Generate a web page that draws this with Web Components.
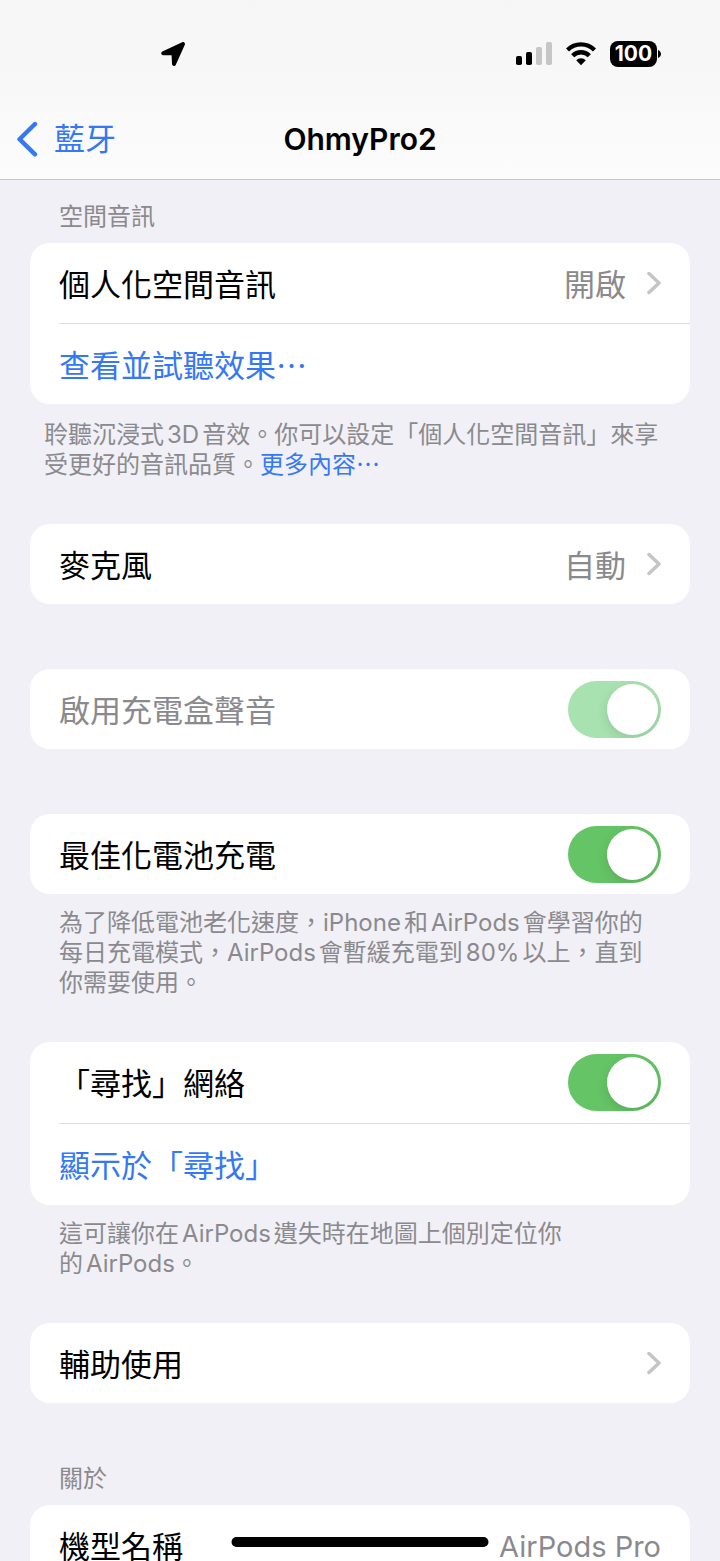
<!DOCTYPE html>
<html lang="zh-Hant">
<head>
<meta charset="utf-8">
<meta name="viewport" content="width=device-width, initial-scale=1">
<title>OhmyPro2</title>
<style>
  :root {
    --page: #f1f0f6;
    --blue: #3478f6;
    --green: #65c466;
    --green-off: #a8e2b0;
    --grey: #8a8a8e;
    --line: #dcdcde;
    --text: 31px;
    --small: 24px;
  }
  body {
    margin: 0;
    background: var(--page);
    color: #000;
    font-family: Inter, "Noto Sans CJK TC", sans-serif;
    font-size: var(--text);
    text-autospace: normal;
  }
</style>
</head>
<body>
<settings-page></settings-page>

<script>
class StatusBar extends HTMLElement {
  constructor() {
    super();
    this.attachShadow({ mode: 'open' }).innerHTML = `
      <style>
        :host {
          display: flex;
          justify-content: space-between;
          align-items: center;
          box-sizing: border-box;
          height: 98px;
          padding: 10px 59px 0 160px;
        }
        svg { display: block; }
        .right { display: flex; align-items: center; gap: 14px; }
        .battery { display: flex; align-items: center; gap: 1px; }
        .level {
          width: 47px;
          height: 26px;
          border-radius: 8px;
          background: #000;
          color: #fff;
          font-size: 21px;
          font-weight: 700;
          line-height: 26px;
          text-align: center;
        }
      </style>
      <svg width="26" height="26" viewBox="0 0 26 26" stroke="#000" stroke-width="4" stroke-linejoin="round" aria-hidden="true">
        <path d="M3.200 12.200 23 3 14 23 13.500 12.200Z"/>
      </svg>
      <div class="right">
        <svg width="36" height="24" viewBox="0 0 36 24" aria-hidden="true">
          <rect x="0" y="14" width="6" height="9" rx="1.800"/>
          <rect x="10" y="10" width="6" height="13" rx="1.800"/>
          <rect x="20" y="5" width="6" height="18" rx="1.800" fill="#c6c6c6"/>
          <rect x="30" y="0" width="6" height="23" rx="1.800" fill="#c6c6c6"/>
        </svg>
        <svg width="30" height="24" viewBox="0 0 30 24" aria-hidden="true">
          <g fill="none" stroke="#000" stroke-width="4.400">
            <path d="M1.500 8a19 19 0 0 1 27 0"/>
            <path d="M6.700 13.700a11.700 11.700 0 0 1 16.600 0"/>
          </g>
          <path d="M15 23.300 10.200 18.300a6.800 6.800 0 0 1 9.600 0Z"/>
        </svg>
        <div class="battery">
          <div class="level">100</div>
          <svg width="3" height="8" viewBox="0 0 3 8" aria-hidden="true">
            <path d="M0 0c4 2 4 6 0 8Z"/>
          </svg>
        </div>
      </div>
    `;
  }
}
customElements.define('status-bar', StatusBar);

class NavBar extends HTMLElement {
  constructor() {
    super();
    this.attachShadow({ mode: 'open' }).innerHTML = `
      <style>
        :host {
          display: grid;
          grid-template-columns: 1fr auto 1fr;
          align-items: center;
          height: 81px;
          padding: 0 16px;
        }
        a {
          display: flex;
          align-items: center;
          gap: 16px;
          color: var(--blue);
          text-decoration: none;
          line-height: 40px;
        }
        h1 {
          margin: 0;
          font-size: 30px;
          font-weight: 600;
          line-height: 40px;
        }
      </style>
      <a href="#back">
        <svg width="22" height="36" viewBox="0 0 22 36" fill="none" stroke="currentColor" stroke-width="4.400" stroke-linecap="round" stroke-linejoin="round" aria-hidden="true">
          <path d="M19 3 3.500 18.200 19 33.300"/>
        </svg>
        <slot name="back"></slot>
      </a>
      <h1><slot></slot></h1>
    `;
  }
}
customElements.define('nav-bar', NavBar);

// white rounded card with an optional heading above and a note below
class SettingsGroup extends HTMLElement {
  constructor() {
    super();
    this.attachShadow({ mode: 'open' }).innerHTML = `
      <style>
        :host { display: block; --row: 80px; }
        :host([tall]) { --row: 81px; }
        h2, .note {
          margin: 0;
          color: var(--grey);
          font-size: var(--small);
          font-weight: 400;
          line-height: 30px;
        }
        h2 { padding: 22px 29px 11px; }
        .card {
          border-radius: 20px;
          background: #fff;
          overflow: hidden;
        }
        .note { padding: 14px 29px 0; }
        :host([wide]) .note { padding: 16px 14px 0; }
        :host(:not([heading])) h2, :host(:not([note])) .note { display: none; }
      </style>
      <h2></h2>
      <div class="card"><slot></slot></div>
      <div class="note"><slot name="note"></slot></div>
    `;
  }

  connectedCallback() {
    this.shadowRoot.querySelector('h2').textContent = this.getAttribute('heading') || '';
  }
}
customElements.define('settings-group', SettingsGroup);

const rowStyle = `
  :host { display: block; padding-left: 29px; }
  :host([divided]) { --divider: 1px; }
  .row {
    display: flex;
    align-items: center;
    justify-content: space-between;
    box-sizing: content-box;
    min-height: var(--row);
    padding: 0 29px 0 0;
    border: 0 solid var(--line);
    border-bottom-width: var(--divider, 0);
    background: none;
    color: inherit;
    font: inherit;
    line-height: 40px;
    text-align: left;
    text-decoration: none;
  }
  .text { padding-top: 3px; }
`;

class LinkRow extends HTMLElement {
  constructor() {
    super();
    this.attachShadow({ mode: 'open' }).innerHTML = `
      <style>
        ${rowStyle}
        .row { box-sizing: border-box; width: 100%; min-height: calc(var(--row) + var(--divider, 0px)); }
        .value { display: flex; align-items: center; gap: 21px; color: var(--grey); }
        :host([plain]) .value { gap: 0; font-size: 29px; }
        :host([plain]) svg { display: none; }
      </style>
      <button class="row" type="button">
        <span class="text"><slot></slot></span>
        <span class="value">
          <span class="text"><slot name="value"></slot></span>
          <svg width="14" height="24" viewBox="0 0 14 24" fill="none" stroke="#c5c5c7" stroke-width="3.500" stroke-linecap="round" stroke-linejoin="round" aria-hidden="true">
            <path d="M2 2.500 12 12 2 21.500"/>
          </svg>
        </span>
      </button>
    `;
  }
}
customElements.define('link-row', LinkRow);

class ActionRow extends HTMLElement {
  constructor() {
    super();
    this.attachShadow({ mode: 'open' }).innerHTML = `
      <style>
        ${rowStyle}
        .row { color: var(--blue); }
      </style>
      <a class="row" href="#"><span class="text"><slot></slot></span></a>
    `;
  }
}
customElements.define('action-row', ActionRow);

class SwitchRow extends HTMLElement {
  constructor() {
    super();
    this.attachShadow({ mode: 'open' }).innerHTML = `
      <style>
        ${rowStyle}
        :host([disabled]) { color: var(--grey); }
        input {
          appearance: none;
          flex: none;
          display: flex;
          box-sizing: border-box;
          width: 93px;
          height: 57px;
          margin: 0;
          padding: 3px;
          border-radius: 29px;
          background: #e9e9ea;
          overflow: hidden;
        }
        input::before {
          content: '';
          width: 51px;
          height: 51px;
          border-radius: 50%;
          background: #fff;
          box-shadow: 0 4px 12px rgba(0, 0, 0, 0.12);
        }
        input:checked { justify-content: flex-end; background: var(--green); }
        input:checked:disabled { background: var(--green-off); }
      </style>
      <label class="row">
        <span class="text"><slot></slot></span>
        <input type="checkbox" role="switch" checked>
      </label>
    `;
  }

  connectedCallback() {
    this.shadowRoot.querySelector('input').disabled = this.hasAttribute('disabled');
  }
}
customElements.define('switch-row', SwitchRow);

class SettingsPage extends HTMLElement {
  constructor() {
    super();
    this.attachShadow({ mode: 'open' }).innerHTML = `
      <style>
        :host {
          display: block;
          height: 100vh;
          overflow: hidden;
        }
        header {
          border-bottom: 1px solid #c5c5c9;
          background: linear-gradient(#f6f6f6, #f8f8f8 50%, #fcfcfd);
        }
        main { padding: 0 30px; }
        settings-group { margin-top: 65px; }
        settings-group[note] + settings-group { margin-top: 44px; }
        settings-group[heading] { margin-top: 39px; }
        settings-group:first-child { margin-top: 0; }
        a { color: var(--blue); text-decoration: none; }
        .keep { white-space: nowrap; }
        .home {
          position: fixed;
          left: 50%;
          bottom: 14px;
          width: 257px;
          height: 10px;
          border-radius: 5px;
          background: #000;
          transform: translateX(-50%);
        }
      </style>
      <header>
        <status-bar></status-bar>
        <nav-bar><span slot="back">藍牙</span>OhmyPro2</nav-bar>
      </header>
      <main>
        <settings-group heading="空間音訊" note wide>
          <link-row divided>個人化空間音訊<span slot="value">開啟</span></link-row>
          <action-row>查看並試聽效果⋯</action-row>
          <span slot="note">聆聽沉浸式3D音效。你可以設定「個人化空間音訊」來享受更好的音訊品質。<a href="#more">更多內容⋯</a></span>
        </settings-group>
        <settings-group>
          <link-row>麥克風<span slot="value">自動</span></link-row>
        </settings-group>
        <settings-group>
          <switch-row disabled>啟用充電盒聲音</switch-row>
        </settings-group>
        <settings-group note>
          <switch-row>最佳化電池充電</switch-row>
          <span slot="note">為了降低電池老化速度，iPhone和AirPods會學習你的每日充電模式，AirPods會暫緩充電到80%以上，直到你需要使用。</span>
        </settings-group>
        <settings-group note tall>
          <switch-row divided>「尋找」網絡</switch-row>
          <action-row>顯示於「尋找」</action-row>
          <span slot="note">這可讓你在AirPods遺失時在地圖上個別定位你<span class="keep">的AirPods。</span></span>
        </settings-group>
        <settings-group>
          <link-row>輔助使用</link-row>
        </settings-group>
        <settings-group heading="關於">
          <link-row plain>機型名稱<span slot="value">AirPods Pro</span></link-row>
        </settings-group>
      </main>
      <div class="home"></div>
    `;
  }
}
customElements.define('settings-page', SettingsPage);
</script>
</body>
</html>
